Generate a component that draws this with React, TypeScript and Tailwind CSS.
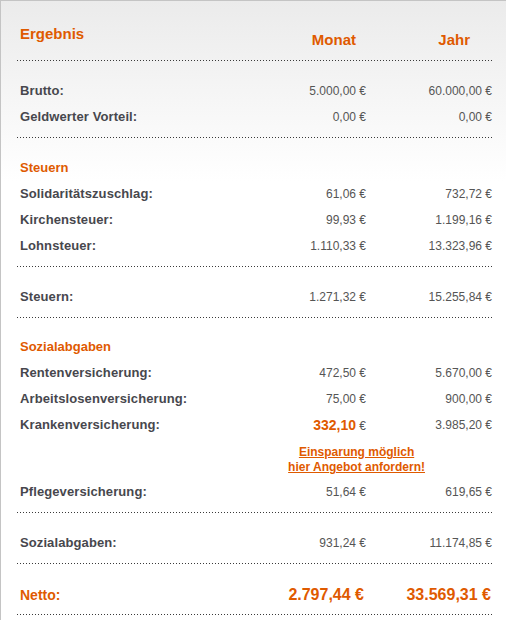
import type { ReactNode } from "react";

type Row = {
  label: string;
  month: ReactNode;
  year: string;
};

const brutto: Row[] = [
  { label: "Brutto:", month: "5.000,00 €", year: "60.000,00 €" },
  { label: "Geldwerter Vorteil:", month: "0,00 €", year: "0,00 €" },
];

const steuern: Row[] = [
  { label: "Solidaritätszuschlag:", month: "61,06 €", year: "732,72 €" },
  { label: "Kirchensteuer:", month: "99,93 €", year: "1.199,16 €" },
  { label: "Lohnsteuer:", month: "1.110,33 €", year: "13.323,96 €" },
];

const sozial: Row[] = [
  { label: "Rentenversicherung:", month: "472,50 €", year: "5.670,00 €" },
  { label: "Arbeitslosenversicherung:", month: "75,00 €", year: "900,00 €" },
];

function Dots() {
  return (
    <div className="h-px bg-[linear-gradient(to_right,#3a3a3a_1px,transparent_1px)] bg-[length:3px_1px] bg-repeat-x" />
  );
}

function DataRow({ label, month, year }: Row) {
  return (
    <div className="grid h-[26px] grid-cols-[1fr_120px_126px] items-center pt-[2px]">
      <span className="pl-[3px] text-[13px] font-bold tracking-[0.1px] text-[#47474d]">{label}</span>
      <span className="text-right text-[12px] text-[#555]">{month}</span>
      <span className="text-right text-[12px] text-[#555]">{year}</span>
    </div>
  );
}

function Heading({ children }: { children: ReactNode }) {
  return (
    <div className="flex h-[26px] items-center pt-[2px] pl-[3px] text-[13px] font-bold text-[#df5a00]">
      {children}
    </div>
  );
}

export default function App() {
  return (
    <div className="min-h-[620px] border-l border-t border-[#c4c4c4] bg-[linear-gradient(#ebebeb,#ffffff_180px)] pl-[16px] pr-[14px] font-['Liberation_Sans',Arial,sans-serif]">
      <div className="flex h-[59px] items-start pt-[24px]">
        <div className="flex-1 pl-[3px] text-[15px] leading-[18px] font-bold text-[#df5a00]">
          Ergebnis
        </div>
        <div className="mt-[6px] w-[120px] pr-[10px] text-right text-[15px] leading-[18px] font-bold text-[#df5a00]">
          Monat
        </div>
        <div className="mt-[6px] w-[126px] pr-[22px] text-right text-[15px] leading-[18px] font-bold text-[#df5a00]">
          Jahr
        </div>
      </div>
      <Dots />

      <div className="pt-4 pb-2">
        {brutto.map((row) => (
          <DataRow key={row.label} {...row} />
        ))}
      </div>
      <Dots />

      <div className="pt-4 pb-2">
        <Heading>Steuern</Heading>
        {steuern.map((row) => (
          <DataRow key={row.label} {...row} />
        ))}
      </div>
      <Dots />

      <div className="pt-4 pb-2">
        <DataRow label="Steuern:" month="1.271,32 €" year="15.255,84 €" />
      </div>
      <Dots />

      <div className="pt-[15px] pb-2">
        <Heading>Sozialabgaben</Heading>
        {sozial.map((row) => (
          <DataRow key={row.label} {...row} />
        ))}
        <DataRow
          label="Krankenversicherung:"
          month={
            <>
              <span className="text-[14px] font-bold text-[#df5a00]">332,10</span> €
            </>
          }
          year="3.985,20 €"
        />
        <div className="flex justify-end pt-[8px] pr-[67px]">
          <a
            href="#"
            className="text-center text-[12px] leading-[15px] font-bold text-[#df5a00] underline"
          >
            Einsparung möglich
            <br />
            hier Angebot anfordern!
          </a>
        </div>
        <div className="pt-[3px]">
          <DataRow label="Pflegeversicherung:" month="51,64 €" year="619,65 €" />
        </div>
      </div>
      <Dots />

      <div className="pt-4 pb-2">
        <DataRow label="Sozialabgaben:" month="931,24 €" year="11.174,85 €" />
      </div>
      <Dots />

      <div className="pt-4 pb-2">
        <div className="grid h-[26px] grid-cols-[1fr_120px_126px] items-center pt-[3px] font-bold text-[#df5a00]">
          <span className="pl-[3px] text-[14px]">Netto:</span>
          <span className="pr-[2px] text-right text-[16px]">2.797,44 €</span>
          <span className="pr-[1px] text-right text-[16px]">33.569,31 €</span>
        </div>
      </div>
      <Dots />
    </div>
  );
}
